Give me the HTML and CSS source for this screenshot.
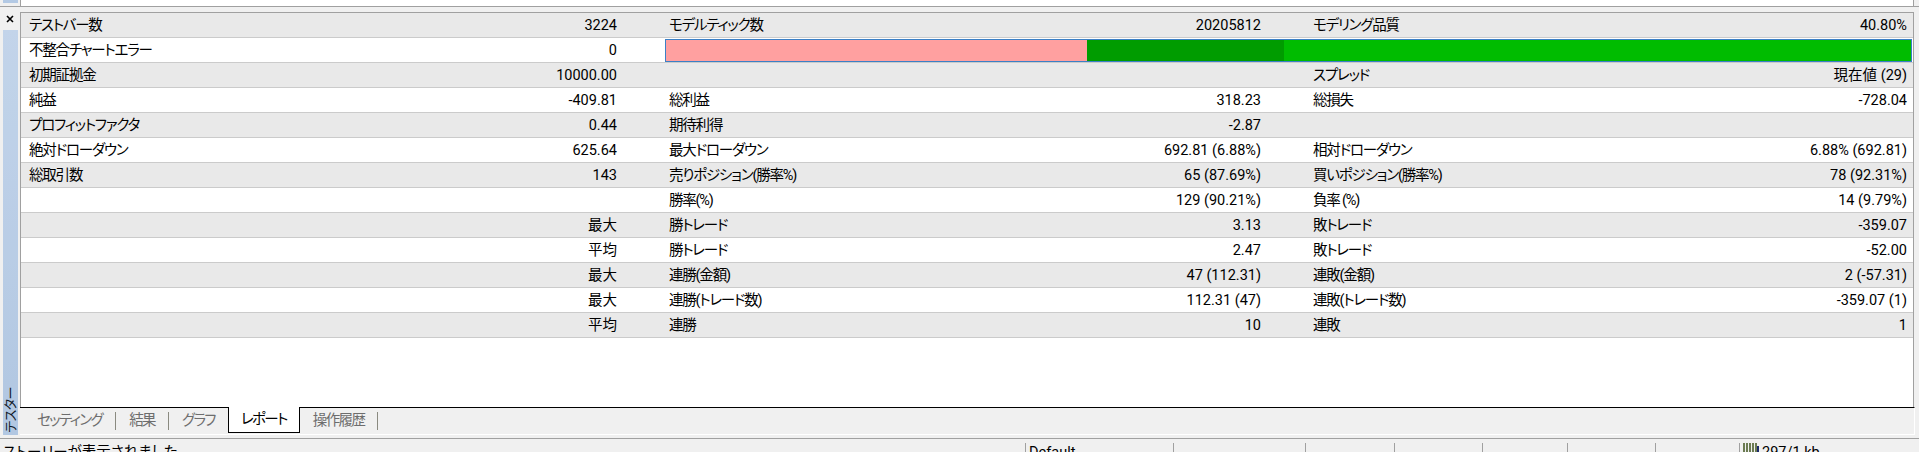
FILE: index.html
```html
<!DOCTYPE html>
<html lang="ja">
<head>
    <meta charset="UTF-8">
    <title>テスター - レポート</title>
    <link rel="stylesheet" href="styles.css">
</head>
<body>
    <div class="top-edge">
        <div class="top-edge-side"><span></span></div>
        <div class="top-edge-main"></div>
    </div>

    <div class="tester">
        <div class="side">
            <div class="close">
                <svg width="8" height="8" viewBox="0 0 8 8"><path d="M1 1L7 7M7 1L1 7" stroke="#000" stroke-width="1.6"/></svg>
            </div>
            <div class="side-bar"><span class="side-title">テスター</span></div>
        </div>

        <div class="main">
            <div class="report">
                <div class="row">
                    <div class="pair"><span class="lbl">テストバー数</span><span class="val">3224</span></div>
                    <div class="pair"><span class="lbl">モデルティック数</span><span class="val">20205812</span></div>
                    <div class="pair"><span class="lbl">モデリング品質</span><span class="val">40.80%</span></div>
                </div>
                <div class="row">
                    <div class="pair"><span class="lbl">不整合チャートエラー</span><span class="val">0</span></div>
                    <div class="quality">
                        <div class="q-bad" style="width: 33.8%;"></div>
                        <div class="q-mid" style="width: 15.8%;"></div>
                        <div class="q-good"></div>
                    </div>
                </div>
                <div class="row">
                    <div class="pair"><span class="lbl">初期証拠金</span><span class="val">10000.00</span></div>
                    <div class="pair"></div>
                    <div class="pair"><span class="lbl">スプレッド</span><span class="val">現在値 (29)</span></div>
                </div>
                <div class="row">
                    <div class="pair"><span class="lbl">純益</span><span class="val">-409.81</span></div>
                    <div class="pair"><span class="lbl">総利益</span><span class="val">318.23</span></div>
                    <div class="pair"><span class="lbl">総損失</span><span class="val">-728.04</span></div>
                </div>
                <div class="row">
                    <div class="pair"><span class="lbl">プロフィットファクタ</span><span class="val">0.44</span></div>
                    <div class="pair"><span class="lbl">期待利得</span><span class="val">-2.87</span></div>
                    <div class="pair"></div>
                </div>
                <div class="row">
                    <div class="pair"><span class="lbl">絶対ドローダウン</span><span class="val">625.64</span></div>
                    <div class="pair"><span class="lbl">最大ドローダウン</span><span class="val">692.81 (6.88%)</span></div>
                    <div class="pair"><span class="lbl">相対ドローダウン</span><span class="val">6.88% (692.81)</span></div>
                </div>
                <div class="row">
                    <div class="pair"><span class="lbl">総取引数</span><span class="val">143</span></div>
                    <div class="pair"><span class="lbl">売りポジション(勝率%)</span><span class="val">65 (87.69%)</span></div>
                    <div class="pair"><span class="lbl">買いポジション(勝率%)</span><span class="val">78 (92.31%)</span></div>
                </div>
                <div class="row">
                    <div class="pair"></div>
                    <div class="pair"><span class="lbl">勝率(%)</span><span class="val">129 (90.21%)</span></div>
                    <div class="pair"><span class="lbl">負率 (%)</span><span class="val">14 (9.79%)</span></div>
                </div>
                <div class="row">
                    <div class="pair"><span class="val">最大</span></div>
                    <div class="pair"><span class="lbl">勝トレード</span><span class="val">3.13</span></div>
                    <div class="pair"><span class="lbl">敗トレード</span><span class="val">-359.07</span></div>
                </div>
                <div class="row">
                    <div class="pair"><span class="val">平均</span></div>
                    <div class="pair"><span class="lbl">勝トレード</span><span class="val">2.47</span></div>
                    <div class="pair"><span class="lbl">敗トレード</span><span class="val">-52.00</span></div>
                </div>
                <div class="row">
                    <div class="pair"><span class="val">最大</span></div>
                    <div class="pair"><span class="lbl">連勝(金額)</span><span class="val">47 (112.31)</span></div>
                    <div class="pair"><span class="lbl">連敗(金額)</span><span class="val">2 (-57.31)</span></div>
                </div>
                <div class="row">
                    <div class="pair"><span class="val">最大</span></div>
                    <div class="pair"><span class="lbl">連勝(トレード数)</span><span class="val">112.31 (47)</span></div>
                    <div class="pair"><span class="lbl">連敗(トレード数)</span><span class="val">-359.07 (1)</span></div>
                </div>
                <div class="row">
                    <div class="pair"><span class="val">平均</span></div>
                    <div class="pair"><span class="lbl">連勝</span><span class="val">10</span></div>
                    <div class="pair"><span class="lbl">連敗</span><span class="val">1</span></div>
                </div>
            </div>

            <div class="tabs">
                <span class="tab">セッティング</span><span class="tab-sep"></span>
                <span class="tab">結果</span><span class="tab-sep"></span>
                <span class="tab">グラフ</span>
                <span class="tab active">レポート</span>
                <span class="tab">操作履歴</span><span class="tab-sep"></span>
            </div>
        </div>
    </div>

    <div class="status">
        <div class="st-cell first">ストーリーが表示されました</div>
        <div class="st-cell">Default</div>
        <div class="st-cell"></div>
        <div class="st-cell"></div>
        <div class="st-cell"></div>
        <div class="st-cell"></div>
        <div class="st-cell"></div>
        <div class="st-cell"></div>
        <div class="st-cell conn">
            <svg width="16" height="12" viewBox="0 0 16 12">
                <rect x="0" y="0" width="2" height="12" fill="#6b7b52"/>
                <rect x="3" y="0" width="2" height="12" fill="#6b7b52"/>
                <rect x="6" y="0" width="2" height="12" fill="#6b7b52"/>
                <rect x="9" y="0" width="2" height="12" fill="#6b7b52"/>
                <rect x="12" y="0" width="2" height="12" fill="#6b7b52"/>
                <rect x="14" y="3" width="2" height="9" fill="#1c2a6a"/>
            </svg>
            <span>297/1 kb</span>
        </div>
    </div>
</body>
</html>
```

FILE: styles.css
```css
* {
    box-sizing: border-box;
}

body {
    margin: 0;
    width: 1919px;
    height: 452px;
    overflow: hidden;
    background: #f0f0f0;
    color: #000;
    font-family: Roboto, "Noto Sans CJK JP", sans-serif;
    font-size: 14.5px;
    font-feature-settings: "palt";
}

/* bottom edge of the panel above */
.top-edge {
    display: flex;
    height: 7px;
    border-bottom: 1px solid #a0a0a0;
}
.top-edge-side {
    width: 20px;
}
.top-edge-side span {
    display: block;
    width: 15px;
    height: 3px;
    margin-left: 3px;
    background: #b3c9e4;
}
.top-edge-main {
    flex: 1;
    margin-right: 5px;
    background: #fff;
    border-left: 1px solid #a0a0a0;
    border-right: 1px solid #a0a0a0;
}

.tester {
    display: flex;
    height: 428px;
}

/* left dock bar */
.side {
    width: 20px;
    display: flex;
    flex-direction: column;
}
.close {
    height: 23px;
    padding: 8px 0 0 6px;
}
.close svg {
    display: block;
}
.side-bar {
    flex: 1;
    width: 15px;
    margin-left: 3px;
    display: flex;
    flex-direction: column;
    justify-content: flex-end;
    align-items: center;
    padding-bottom: 2px;
    background:
        radial-gradient(circle, rgba(255, 255, 255, 0.35) 0.6px, transparent 0.8px) 0 0 / 2px 2px,
        linear-gradient(#b7cce6, #a2bcdc);
}
.side-title {
    writing-mode: vertical-rl;
    text-orientation: sideways;
    transform: rotate(180deg);
    font-size: 13px;
    line-height: 15px;
    letter-spacing: -0.5px;
    color: #101828;
}

.main {
    flex: 1;
    min-width: 0;
    display: flex;
    flex-direction: column;
}

/* report list */
.report {
    flex: 1;
    margin: 5px 5px 0 0;
    background: #fff;
    border: 1px solid #a0a0a0;
    border-bottom: none;
}
.row {
    display: grid;
    grid-template-columns: 600px 604px 1fr;
    column-gap: 40px;
    height: 25px;
    padding-left: 2px;
    border-bottom: 1px solid #cbcbcb;
    line-height: 24px;
}
.row:nth-child(odd) {
    background: #e9e9e9;
}
.pair {
    display: flex;
    min-width: 0;
    padding-top: 1px;
}
.lbl {
    padding-left: 6px;
    letter-spacing: -1.2px;
    white-space: nowrap;
}
.val {
    margin-left: auto;
    padding-right: 6px;
    white-space: nowrap;
}

.quality {
    grid-column: 2 / 4;
    display: flex;
    height: 23px;
    margin: 1px 1px 0 2px;
    border: 1px solid #3b80c6;
}
.q-bad {
    background: #ffa0a0;
}
.q-mid {
    background: #009c00;
}
.q-good {
    flex: 1;
    background: #00bc00;
}

/* tabs under the report */
.tabs {
    height: 28px;
    margin-right: 4px;
    padding-left: 4px;
    display: flex;
    align-items: center;
    border-top: 1px solid #000;
    border-right: 1px solid #fff;
    border-bottom: 1px solid #fff;
}
.tab {
    padding: 0 13px;
    line-height: 26px;
    letter-spacing: -1.6px;
    color: #6d6d6d;
    white-space: nowrap;
}
.tab-sep {
    width: 1px;
    height: 18px;
    background: #8a8a80;
}
.tab.active {
    align-self: flex-start;
    height: 26px;
    margin-top: -1px;
    padding: 0 12px 0 12px;
    line-height: 25px;
    color: #000;
    background: #fff;
    border: 1px solid #000;
    border-top: none;
}

/* status bar */
.status {
    margin-top: 3px;
    height: 14px;
    border-top: 1px solid #a0a0a0;
    display: grid;
    grid-template-columns: 1025px 148px 132px 89px 88px 85px 88px 84px 1fr;
    overflow: hidden;
}
.st-cell {
    margin-top: 4px;
    padding-left: 3px;
    line-height: 20px;
    border-left: 1px solid #a0a0a0;
    white-space: nowrap;
}
.st-cell.first {
    border-left: none;
}
.conn {
    display: flex;
    gap: 3px;
}
```
